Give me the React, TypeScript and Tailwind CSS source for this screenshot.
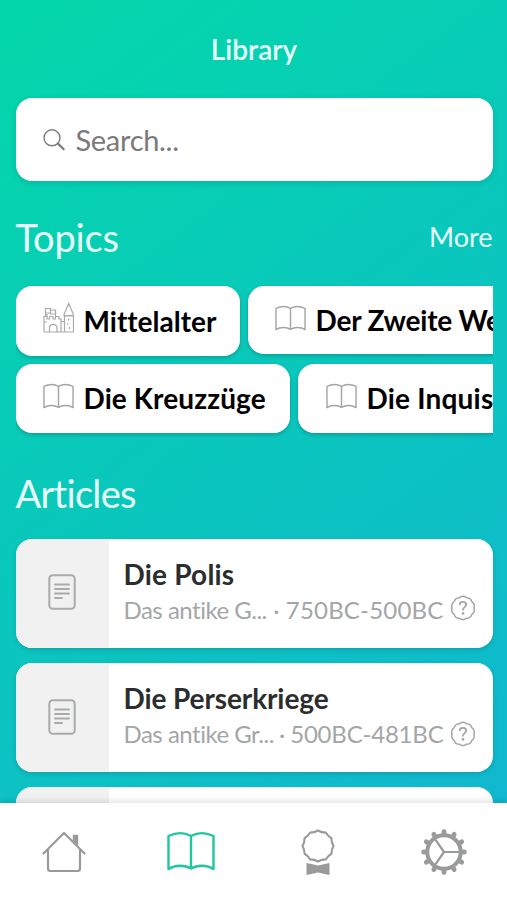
import clsx from "clsx";

interface Topic {
  name: string;
  icon: "castle" | "book";
  className: string;
  labelClass: string;
}

interface Article {
  title: string;
  titleClass: string;
  epoch: string;
  epochClass: string;
  years: string;
  yearsClass: string;
  iconClass: string;
  helpClass: string;
}

const topicRows: Topic[][] = [
  [
    { name: "Mittelalter", icon: "castle", className: "h-[70px] w-[224px] pl-[27px]", labelClass: "" },
    { name: "Der Zweite Weltkrieg", icon: "book", className: "h-[68px] w-[340px] pl-[27px]", labelClass: "tracking-[-0.2px]" },
  ],
  [
    { name: "Die Kreuzzüge", icon: "book", className: "h-[69px] w-[274px] pl-[27px]", labelClass: "-mt-[2px] tracking-[0.1px]" },
    { name: "Die Inquisition", icon: "book", className: "h-[69px] w-[290px] pl-7", labelClass: "-mt-[2px] tracking-[0.2px]" },
  ],
];

const articles: Article[] = [
  {
    title: "Die Polis",
    titleClass: "tracking-[0.2px]",
    epoch: "Das antike G...",
    epochClass: "tracking-[-0.5px]",
    years: "750BC-500BC",
    yearsClass: "tracking-[0.2px]",
    iconClass: "pb-1",
    helpClass: "-mt-1",
  },
  {
    title: "Die Perserkriege",
    titleClass: "tracking-[-0.1px]",
    epoch: "Das antike Gr...",
    epochClass: "tracking-[-0.5px]",
    years: "500BC-481BC",
    yearsClass: "tracking-[-0.2px]",
    iconClass: "pb-px",
    helpClass: "-mt-px",
  },
];

function polar(c: number, r: number, deg: number) {
  const a = (deg * Math.PI) / 180;
  return `${(c + r * Math.cos(a)).toFixed(2)} ${(c + r * Math.sin(a)).toFixed(2)}`;
}

// Closed ring of arcs that bulge outwards
function scallop(c: number, r: number, count: number, arc: number) {
  const step = 360 / count;
  let d = `M${polar(c, r, -90 - step / 2)}`;
  for (let i = 1; i <= count; i++) {
    d += `A${arc} ${arc} 0 0 1 ${polar(c, r, -90 + (i - 0.5) * step)}`;
  }
  return d + "Z";
}

// Closed ring of shallow points, the first one at the top
function rosette(c: number, outer: number, inner: number, count: number) {
  const step = 360 / count;
  let d = `M${polar(c, outer, -90)}`;
  for (let i = 1; i <= count; i++) {
    d += `Q${polar(c, inner, -90 + (i - 0.5) * step)} ${polar(c, outer, -90 + i * step)}`;
  }
  return d + "Z";
}

function SearchIcon() {
  return (
    <svg className="h-6 w-6 text-[#7c7c7c]" fill="none" stroke="currentColor" viewBox="0 0 24 24">
      <circle cx="9" cy="9.8" r="8" strokeWidth={1.4} />
      <path d="M15 15.600L20.700 21.300" strokeLinecap="round" strokeWidth={2.2} />
    </svg>
  );
}

function BookIcon({ className, strokeWidth }: { className: string; strokeWidth: number }) {
  return (
    <svg className={className} fill="none" stroke="currentColor" viewBox="0 0 48 40">
      <path
        strokeLinejoin="round"
        strokeWidth={strokeWidth}
        d="M24 5C17 1 10 1 1.500 5V38C8 33.800 18 33.800 24 37.500C30 33.800 40 33.800 46.500 38V5C38 1 31 1 24 5ZM24 5V37.500"
      />
    </svg>
  );
}

function CastleIcon() {
  return (
    <svg className="h-[31px] w-[31px] text-[#a9a9a9]" fill="none" stroke="currentColor" strokeWidth={1.2} viewBox="0 0 31 31">
      <path d="M1 30V14.500H4V17H6.500V14.500H10V17H12.500V14.500H16V17H18V19.500H21M1 20H4M1 30H30.500V13.500H21.500V30M18 19.500V30M21 12.500L25.700 1.500L30.500 12.500V14H21V12.500" />
      <path d="M6.500 30V25A4 4 0 0 1 14 25V30M2.500 14.500V6.500H7.500V11H2.500M7.500 8H12.500V12H7.500V11M4 14.500V12M12.500 12V14.500" />
      <path strokeWidth={1.3} d="M25.700 16.500V18.500M24 22H25.300M26.500 25V27" />
    </svg>
  );
}

function DocumentIcon() {
  return (
    <svg className="h-9 w-7 text-[#a9abab]" fill="none" stroke="currentColor" strokeLinecap="round" viewBox="0 0 28 36">
      <rect x="1.300" y="1.200" width="25.400" height="33.600" rx="3.500" strokeWidth={2} />
      <path strokeWidth={1.9} d="M7 10.500H21M7 15H21M7 19.500H21M7 24H14" />
    </svg>
  );
}

function HelpIcon() {
  return (
    <svg className="h-[26px] w-[26px] text-[#a3a6a6]" fill="none" stroke="currentColor" viewBox="0 0 26 26">
      <path strokeWidth={1.5} strokeLinejoin="round" d={scallop(13, 10.9, 10, 5.5)} />
      <path strokeWidth={1.8} strokeLinecap="round" d="M9.800 9.300C10 6 16.200 6 16.200 9.500C16.200 12.200 13 12 13 14.800" />
      <circle cx="13" cy="18.400" r="1.300" fill="currentColor" stroke="none" />
    </svg>
  );
}

function HomeIcon() {
  return (
    <svg className="h-11 w-11 text-[#999b9a]" fill="none" stroke="currentColor" strokeLinecap="round" strokeLinejoin="round" viewBox="0 0 44 44">
      <path strokeWidth={2.2} d="M1.500 23.500L22 3L42.500 23.500M6 20V38.500Q6 41 8.500 41H35.500Q38 41 38 38.500V20" />
      <path fill="currentColor" strokeWidth={1.4} d="M31.500 10.500V5.500H35.500V15Z" />
    </svg>
  );
}

function AwardIcon() {
  return (
    <svg className="h-12 w-9 text-[#999b9a]" fill="none" stroke="currentColor" viewBox="0 0 36 48">
      <path strokeWidth={2.1} strokeLinejoin="round" d={rosette(18, 15.5, 13.9, 12)} />
      <path fill="currentColor" stroke="none" d="M6.500 35L18 37.500L29.500 35V47L18 44.500L6.500 47Z" />
    </svg>
  );
}

function GearIcon() {
  const teeth = Array.from({ length: 12 }, (_, i) => i * 30);
  return (
    <svg className="h-[46px] w-[46px] text-[#999b9a]" fill="none" stroke="currentColor" viewBox="0 0 46 46">
      <circle cx="23" cy="23" r="16.700" strokeWidth={4} />
      {teeth.map((deg) => (
        <path key={deg} strokeWidth={4.8} strokeLinecap="round" d={`M${polar(23, 17.5, deg)}L${polar(23, 20.4, deg)}`} />
      ))}
      <path strokeWidth={2.2} d={`M23 23H38M23 23L${polar(23, 15, 125)}M23 23L${polar(23, 15, 235)}`} />
    </svg>
  );
}

function TopicCard({ topic }: { topic: Topic }) {
  return (
    <button
      className={clsx(
        "flex shrink-0 items-center rounded-2xl bg-white text-black shadow-[0_2px_4px_rgba(0,0,0,0.2)]",
        topic.className
      )}
    >
      {topic.icon === "castle" ? (
        <span className="-mt-2">
          <CastleIcon />
        </span>
      ) : (
        <BookIcon className="-mt-[5px] h-[26px] w-[31px] text-[#a3a5a5]" strokeWidth={2.2} />
      )}
      <span className={clsx("ml-[10px] text-[28px] leading-9 font-bold whitespace-nowrap", topic.labelClass)}>
        {topic.name}
      </span>
    </button>
  );
}

function ArticleCard({ article }: { article: Article }) {
  return (
    <div className="flex h-[109px] shrink-0 overflow-hidden rounded-2xl bg-white shadow-[0_2px_5px_rgba(0,0,0,0.15)]">
      <div className={clsx("flex w-[93px] shrink-0 items-center justify-center bg-[#f1f1f1]", article.iconClass)}>
        <DocumentIcon />
      </div>
      <div className="flex-1 pt-[17px] pr-[17px] pl-[15px]">
        <h3 className={clsx("text-[28px] leading-9 font-bold text-[#2b2e2e]", article.titleClass)}>{article.title}</h3>
        <div className="flex h-9 items-center text-[24px] whitespace-nowrap text-[#a3a6a6]">
          <span className={article.epochClass}>{article.epoch}</span>
          <span className="flex-1 text-center">·</span>
          <span className={article.yearsClass}>{article.years}</span>
          <span className={clsx("ml-[6px]", article.helpClass)}>
            <HelpIcon />
          </span>
        </div>
      </div>
    </div>
  );
}

export default function App() {
  return (
    <div className="flex h-[900px] w-[507px] flex-col overflow-hidden bg-[linear-gradient(143deg,#03d7a9,#12b5d3)] font-[Lato,sans-serif] [font-variant-ligatures:none]">
      <main className="flex min-h-0 flex-1 flex-col overflow-hidden pr-[14.5px] pl-[15.5px]">
        <h1 className="mt-[31px] h-9 text-center text-[28px] leading-9 font-semibold text-[#e9fffb]">Library</h1>

        <div className="mt-[31px] flex h-[83px] shrink-0 items-center rounded-2xl bg-white pl-[27px] shadow-[0_2px_6px_rgba(0,0,0,0.12)]">
          <SearchIcon />
          <span className="ml-[9px] text-[29px] leading-9 tracking-[-0.3px] text-[#7a7a7a]">Search...</span>
        </div>

        <div className="mt-[31px] flex h-[50px] shrink-0 items-center justify-between text-[#e9fffb]">
          <h2 className="text-[38px] leading-[50px] tracking-[-0.2px]">Topics</h2>
          <span className="text-[27px] leading-9">More</span>
        </div>

        <div className="flex h-[176px] shrink-0 flex-col overflow-hidden pt-6">
          {topicRows.map((row, i) => (
            <div key={i} className={clsx("flex shrink-0 items-start gap-2", i === 0 && "h-[78px]")}>
              {row.map((topic) => (
                <TopicCard key={topic.name} topic={topic} />
              ))}
            </div>
          ))}
        </div>

        <h2 className="mt-[30px] h-[51px] shrink-0 text-[38px] leading-[50px] tracking-[-0.7px] text-[#e9fffb]">Articles</h2>

        <div className="mt-5 flex shrink-0 flex-col gap-[15px]">
          {articles.map((article) => (
            <ArticleCard key={article.title} article={article} />
          ))}
          <div className="h-[109px] overflow-hidden rounded-2xl bg-white">
            <div className="h-full w-[93px] bg-[#f1f1f1]" />
          </div>
        </div>
      </main>

      <nav className="relative flex h-[97px] shrink-0 items-center bg-white pl-[42px] shadow-[0_-2px_6px_rgba(0,0,0,0.12)]">
        <HomeIcon />
        <BookIcon className="mr-[85px] mb-0.5 ml-[81px] h-10 w-12 text-[#20c79c]" strokeWidth={2.4} />
        <AwardIcon />
        <span className="ml-[85px]">
          <GearIcon />
        </span>
      </nav>
    </div>
  );
}
